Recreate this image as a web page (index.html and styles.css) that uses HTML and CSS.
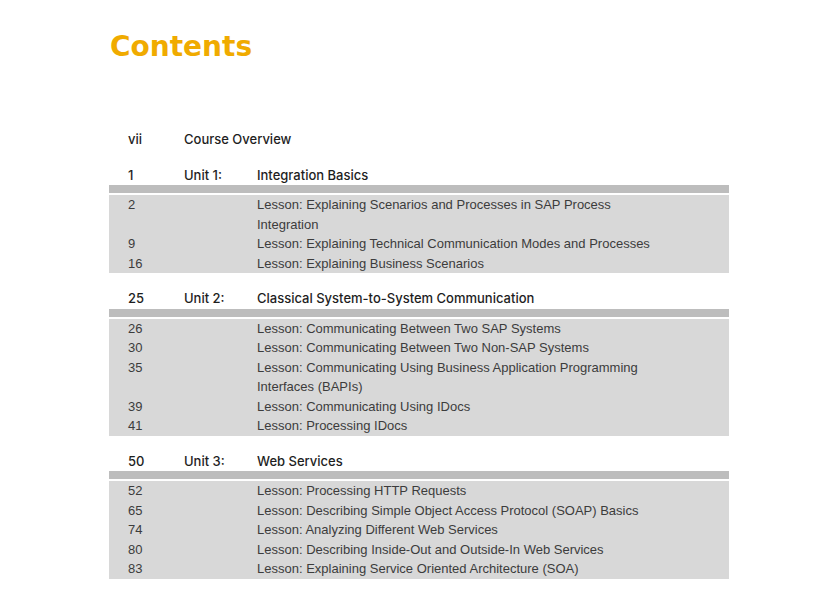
FILE: index.html
```html
<!DOCTYPE html>
<html>
<head>
<meta charset="utf-8">
<title>Contents</title>
<link rel="stylesheet" href="styles.css">
</head>
<body>
<div class="page">
  <h1 class="title">Contents</h1>
  <div class="toc">
    <div class="row head overview"><span class="num">vii</span><span class="label wide">Course Overview</span></div>

    <section class="unit">
      <div class="row head"><span class="num">1</span><span class="label">Unit 1:</span><span class="name">Integration Basics</span></div>
      <div class="bar"></div>
      <div class="lessons">
        <div class="row"><span class="num">2</span><span></span><span class="name">Lesson: Explaining Scenarios and Processes in SAP Process Integration</span></div>
        <div class="row"><span class="num">9</span><span></span><span class="name">Lesson: Explaining Technical Communication Modes and Processes</span></div>
        <div class="row"><span class="num">16</span><span></span><span class="name">Lesson: Explaining Business Scenarios</span></div>
      </div>
    </section>

    <section class="unit">
      <div class="row head"><span class="num">25</span><span class="label">Unit 2:</span><span class="name">Classical System-to-System Communication</span></div>
      <div class="bar"></div>
      <div class="lessons">
        <div class="row"><span class="num">26</span><span></span><span class="name">Lesson: Communicating Between Two SAP Systems</span></div>
        <div class="row"><span class="num">30</span><span></span><span class="name">Lesson: Communicating Between Two Non-SAP Systems</span></div>
        <div class="row"><span class="num">35</span><span></span><span class="name">Lesson: Communicating Using Business Application Programming Interfaces (BAPIs)</span></div>
        <div class="row"><span class="num">39</span><span></span><span class="name">Lesson: Communicating Using IDocs</span></div>
        <div class="row"><span class="num">41</span><span></span><span class="name">Lesson: Processing IDocs</span></div>
      </div>
    </section>

    <section class="unit">
      <div class="row head"><span class="num">50</span><span class="label">Unit 3:</span><span class="name">Web Services</span></div>
      <div class="bar"></div>
      <div class="lessons">
        <div class="row"><span class="num">52</span><span></span><span class="name">Lesson: Processing HTTP Requests</span></div>
        <div class="row"><span class="num">65</span><span></span><span class="name">Lesson: Describing Simple Object Access Protocol (SOAP) Basics</span></div>
        <div class="row"><span class="num">74</span><span></span><span class="name">Lesson: Analyzing Different Web Services</span></div>
        <div class="row"><span class="num">80</span><span></span><span class="name">Lesson: Describing Inside-Out and Outside-In Web Services</span></div>
        <div class="row"><span class="num">83</span><span></span><span class="name">Lesson: Explaining Service Oriented Architecture (SOA)</span></div>
      </div>
    </section>
  </div>
</div>
</body>
</html>
```

FILE: styles.css
```css
html, body {
  margin: 0;
  padding: 0;
  background: #ffffff;
}

.page {
  padding-left: 109px;
  padding-top: 31px;
  width: 620px;
  font-family: "Liberation Sans", Arial, sans-serif;
}

.title {
  margin: 0 0 0 1px;
  font-family: "DejaVu Sans", sans-serif;
  font-weight: bold;
  font-size: 28px;
  line-height: 32px;
  color: #f0ab00;
}

.toc {
  margin-top: 67px;
}

.row {
  display: grid;
  grid-template-columns: 56px 73px 1fr;
  padding-left: 19px;
  font-size: 13px;
  line-height: 19.5px;
  color: #3c3c3c;
}

.row .name {
  padding-right: 70px;
}

.row .wide {
  grid-column: 2 / 4;
}

.head {
  font-family: "Inter", "Liberation Sans", sans-serif;
  font-weight: 500;
  color: #1e1e1e;
}

.overview {
  margin-bottom: 16px;
}

.unit {
  margin-bottom: 16px;
}

.bar {
  height: 8px;
  background: #bdbdbd;
  margin-bottom: 2px;
}

.lessons {
  background: #d8d8d8;
}
```
